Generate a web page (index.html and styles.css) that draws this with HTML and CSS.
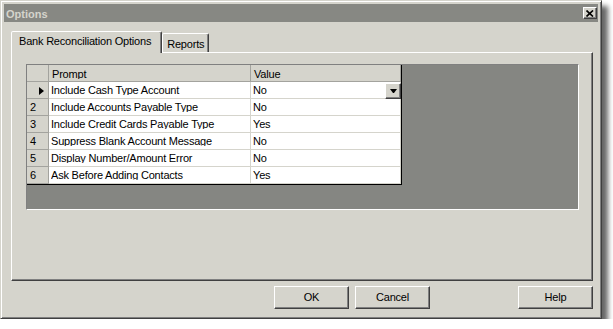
FILE: index.html
```html
<!DOCTYPE html>
<html lang="en">
<head>
  <meta charset="UTF-8" />
  <title>Options</title>
  <link rel="stylesheet" href="styles.css">
</head>
<body>

  <div class="window">
    <div class="titlebar">
      <span class="title">Options</span>
      <span class="close">
        <svg width="8" height="7" viewBox="0 0 8 7">
          <path d="M0.5 0.5 L7 6.5 M7 0.5 L0.5 6.5" stroke="#000" stroke-width="1.7" fill="none" />
        </svg>
      </span>
    </div>

    <div class="tabs">
      <div class="tab active">Bank Reconciliation Options</div>
      <div class="tab">Reports</div>
    </div>

    <div class="panel">
      <div class="grid-area">
        <div class="grid">
          <div class="cell fixed"><span></span></div>
          <div class="cell fixed head"><span>Prompt</span></div>
          <div class="cell fixed head"><span>Value</span></div>

          <div class="cell fixed"><i class="pointer"></i></div>
          <div class="cell"><span>Include Cash Type Account</span></div>
          <div class="cell"><span>No</span><b class="drop"><i></i></b></div>

          <div class="cell fixed"><span>2</span></div>
          <div class="cell"><span>Include Accounts Payable Type</span></div>
          <div class="cell"><span>No</span></div>

          <div class="cell fixed"><span>3</span></div>
          <div class="cell"><span>Include Credit Cards Payable Type</span></div>
          <div class="cell"><span>Yes</span></div>

          <div class="cell fixed"><span>4</span></div>
          <div class="cell"><span>Suppress Blank Account Message</span></div>
          <div class="cell"><span>No</span></div>

          <div class="cell fixed"><span>5</span></div>
          <div class="cell"><span>Display Number/Amount Error</span></div>
          <div class="cell"><span>No</span></div>

          <div class="cell fixed"><span>6</span></div>
          <div class="cell"><span>Ask Before Adding Contacts</span></div>
          <div class="cell"><span>Yes</span></div>
        </div>
      </div>
    </div>

    <div class="buttons">
      <button class="btn">OK</button>
      <button class="btn">Cancel</button>
      <button class="btn help">Help</button>
    </div>
  </div>

</body>
</html>
```

FILE: styles.css
```css
body {
  margin: 0;
  background: #fff;
  font-family: "Liberation Sans", Arial, sans-serif;
  font-size: 11px;
  letter-spacing: -0.2px;
  color: #000;
}
.window {
  width: 602px;
  height: 319px;
  box-sizing: border-box;
  padding: 3px;
  background: #d5d4cc;
  border: 1px solid;
  border-color: #d5d4cc #404040 #404040 #d5d4cc;
  box-shadow: inset 1px 1px #fff, inset -1px -1px #808080, 6px 6px 5px rgba(0, 0, 0, 0.6);
}
.titlebar {
  height: 18px;
  padding: 0 1px 0 2px;
  display: flex;
  align-items: center;
  justify-content: space-between;
  background: #878883;
}
.title {
  align-self: flex-start;
  color: #d5d4cc;
  font-weight: bold;
  letter-spacing: 0;
  line-height: 20px;
}
.close {
  width: 14px;
  height: 12px;
  box-sizing: border-box;
  display: flex;
  align-items: center;
  justify-content: center;
  background: #d5d4cc;
  border: 1px solid;
  border-color: #fff #404040 #404040 #fff;
  box-shadow: inset -1px -1px #808080;
}
.tabs {
  display: flex;
  align-items: flex-end;
  height: 21px;
  margin: 9px 0 0 7px;
}
.tab {
  height: 19px;
  box-sizing: border-box;
  padding: 3px 4px 0 4px;
  line-height: 14px;
  background: #d5d4cc;
  border: 1px solid;
  border-bottom: none;
  border-color: #fff #404040 transparent #fff;
  border-radius: 2px 2px 0 0;
  box-shadow: inset -1px 0 #808080;
}
.tab.active {
  height: 22px;
  margin-bottom: -1px;
  padding: 2px 10px 0 7px;
  position: relative;
  z-index: 1;
}
.panel {
  width: 582px;
  height: 229px;
  box-sizing: border-box;
  margin-left: 7px;
  padding: 11px 0 0 14px;
  border: 1px solid;
  border-color: #fff #404040 #404040 #fff;
  box-shadow: inset -1px -1px #808080;
}
.grid-area {
  width: 553px;
  height: 146px;
  box-sizing: border-box;
  background: #858682;
  border: 1px solid;
  border-color: #808080 #fff #fff #808080;
}
.grid {
  display: grid;
  grid-template-columns: 22px 202px 150px;
  width: max-content;
  background: #fff;
  border-right: 1px solid #000;
  border-bottom: 1px solid #000;
}
.cell {
  height: 17px;
  box-sizing: border-box;
  padding-left: 2px;
  position: relative;
  border-right: 1px solid #d5d4cc;
  border-bottom: 1px solid #d5d4cc;
}
.cell span {
  display: block;
  height: 11px;
  margin-top: 2px;
  line-height: 13px;
  overflow: hidden;
  white-space: nowrap;
}
.fixed {
  background: #d5d4cc;
  border-color: #a3a39e;
}
.fixed span {
  padding-left: 1px;
}
.head span {
  margin-top: 3px;
}
.pointer {
  display: block;
  width: 0;
  height: 0;
  margin: 5px 0 0 10px;
  border-left: 5px solid #000;
  border-top: 4px solid transparent;
  border-bottom: 4px solid transparent;
}
.drop {
  position: absolute;
  top: 1px;
  right: -1px;
  width: 16px;
  height: 16px;
  box-sizing: border-box;
  display: flex;
  align-items: center;
  justify-content: center;
  background: #d5d4cc;
  border: 1px solid;
  border-color: #fff #404040 #404040 #fff;
  box-shadow: inset -1px -1px #808080;
}
.drop i {
  width: 1px;
  height: 0;
  border-top: 4px solid #000;
  border-left: 3px solid transparent;
  border-right: 3px solid transparent;
}
.buttons {
  display: flex;
  gap: 6px;
  width: 582px;
  box-sizing: border-box;
  margin: 5px 0 0 7px;
  padding-left: 263px;
}
.btn {
  width: 75px;
  height: 23px;
  box-sizing: border-box;
  padding: 0 0 1px;
  font: inherit;
  letter-spacing: inherit;
  line-height: 20px;
  color: #000;
  text-align: center;
  background: #d5d4cc;
  border: 1px solid;
  border-color: #fff #404040 #404040 #fff;
  border-radius: 0;
  box-shadow: inset -1px -1px #808080;
}
.help {
  margin-left: auto;
}
```
